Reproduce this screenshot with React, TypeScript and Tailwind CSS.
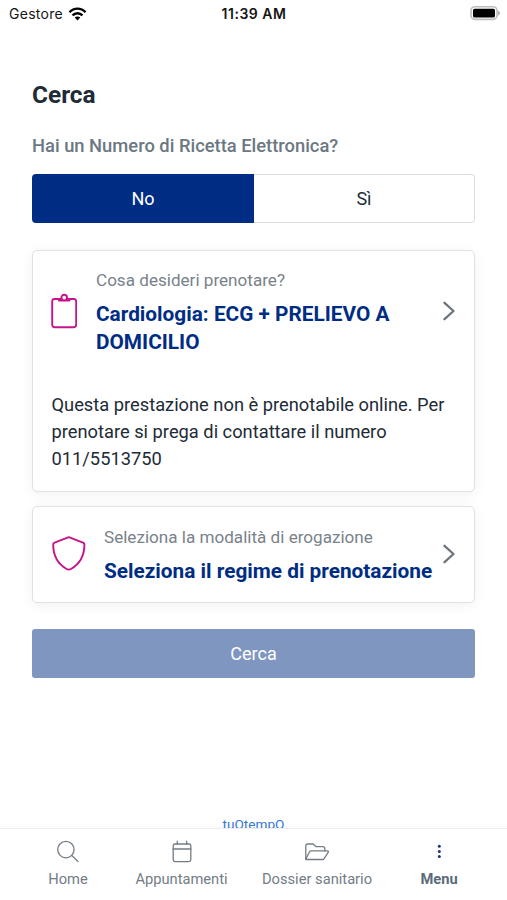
import type { ReactNode } from 'react';

const StatusBar = () => {
  return (
    <header className="grid h-7 shrink-0 grid-cols-3 items-center pr-[7px] pl-[9px] font-['Inter',sans-serif] leading-7 text-[#151515]">
      <div className="flex items-center gap-[5px]">
        <span className="text-[14px] tracking-[0.28px]">Gestore</span>
        <svg width="19" height="14" viewBox="0 0 18 14" fill="none" stroke="#000" strokeWidth="2.4">
          <path d="M1 5.2C5.5.4 12.5.4 17 5.2" />
          <path d="M4 8.4c2.9-2.9 7.1-2.9 10 0" />
          <path d="M9 13.6l-2.8-3c1.6-1.5 4-1.5 5.6 0z" fill="#000" stroke="none" />
        </svg>
      </div>

      <span className="-ml-px text-center text-[14px] font-semibold tracking-[0.5px] whitespace-nowrap">11:39 AM</span>

      <svg className="-mt-px justify-self-end" width="31" height="15" viewBox="0 0 31 15">
        <rect x="2" y=".8" width="26" height="12.6" rx="3.8" fill="#fff" stroke="#bdbdbd" strokeWidth="1.6" />
        <rect x="4" y="2.7" width="22" height="8.8" rx="1.6" fill="#000" />
        <path d="M29.3 5c1.8.8 1.8 3.4 0 4.2z" fill="#aaa" stroke="#aaa" strokeWidth=".6" />
      </svg>
    </header>
  );
};

const Chevron = () => {
  return (
    <svg
      className="shrink-0"
      width="12"
      height="20"
      viewBox="0 0 12 20"
      fill="none"
      stroke="#6c757d"
      strokeWidth="2.3"
      strokeLinecap="round"
      strokeLinejoin="round"
    >
      <path d="M1.5 1.8L10.5 10l-9 8.2" />
    </svg>
  );
};

const ClipboardIcon = () => {
  return (
    <svg width="26" height="36" viewBox="0 0 26 36" fill="none" stroke="#c6148a" strokeWidth="1.9">
      <rect x="1.2" y="6" width="24" height="28.2" rx="2.4" />
      <rect x="7" y="5.4" width="12.4" height="3.2" rx="1" fill="#c6148a" stroke="none" />
      <circle cx="13.2" cy="4.6" r="2.8" fill="#fff" />
    </svg>
  );
};

const ShieldIcon = () => {
  return (
    <svg
      width="34"
      height="36"
      viewBox="0 0 34 36"
      fill="none"
      stroke="#c6148a"
      strokeWidth="1.9"
      strokeLinejoin="round"
    >
      <path d="M16.8 1.2L2.6 6.6C1.6 7 1.2 7.6 1.2 8.6c0 11.4 4.9 19.6 13.4 24.4 1.6.9 2.8.9 4.4 0C27.5 28.2 32.4 20 32.4 8.6c0-1-.4-1.6-1.4-2z" />
    </svg>
  );
};

type SelectorProps = {
  icon: ReactNode;
  label: string;
  value: string;
};

const Selector = ({ icon, label, value }: SelectorProps) => {
  return (
    <button className="flex w-full items-center text-left">
      {icon}
      <span className="min-w-0 flex-1">
        <span className="block text-[17.1px] leading-[26px] whitespace-nowrap text-[#79828a]">{label}</span>
        <span className="mt-[6.5px] block text-[20.8px] leading-7 font-bold text-[#002d84]">{value}</span>
      </span>
      <Chevron />
    </button>
  );
};

type TabProps = {
  name: string;
  active?: boolean;
  className: string;
  children: ReactNode;
};

const Tab = ({ name, active, className, children }: TabProps) => {
  return (
    <a className={`flex flex-col items-center ${className}`}>
      <svg
        width="26"
        height="26"
        viewBox="0 0 26 26"
        fill="none"
        stroke="#737c86"
        strokeWidth="1.3"
        strokeLinecap="round"
        strokeLinejoin="round"
      >
        {children}
      </svg>
      <span
        className={`mt-1 text-[14.7px] leading-5 whitespace-nowrap ${active ? 'font-bold text-[#5c6b7a]' : 'text-[#737c86]'}`}
      >
        {name}
      </span>
    </a>
  );
};

const TabBar = () => {
  return (
    <nav className="flex h-[72px] shrink-0 border-t border-[#eeeeee] bg-white pt-[10px] shadow-[0_0_4px_rgba(0,0,0,0.06)]">
      <Tab name="Home" className="ml-[18px] w-[100px]">
        <circle cx="10.9" cy="10.6" r="8.2" />
        <path d="M16.8 16.5l6.2 6" />
      </Tab>

      <Tab name="Appuntamenti" className="ml-[4px] w-[119px]">
        <rect x="4.2" y="5" width="17.6" height="17.6" rx="1.8" />
        <path d="M4.2 10h17.6M8.3 5V2.2M17.7 5V2.2" />
      </Tab>

      <Tab name="Dossier sanitario" className="ml-[11px] w-[130px]">
        <path d="M1.8 20.2V7c0-1.2.8-2 2-2h5.4l2.8 2.7h6.8c1.2 0 2 .8 2 2v2.2" />
        <path d="M1.8 20.2L5.4 13c.4-.8.9-1.1 1.7-1.1h16.5c.8 0 1.1.6.7 1.2l-4.2 6.5c-.4.6-.9.9-1.7.9H2.4c-.4 0-.6-.1-.6-.3z" />
      </Tab>

      <Tab name="Menu" active className="ml-[17px] w-[80px]">
        <g fill="#20307f" stroke="none">
          <circle cx="13.3" cy="7.3" r="1.5" />
          <circle cx="13.3" cy="12.5" r="1.5" />
          <circle cx="13.3" cy="17.5" r="1.5" />
        </g>
      </Tab>
    </nav>
  );
};

const card =
  'rounded-[5px] border border-[#dfe1e2] bg-white shadow-[0_2px_14px_rgba(0,0,0,0.06)]';

export default function App() {
  return (
    <div className="flex h-[900px] w-[507px] flex-col overflow-hidden bg-white font-['Roboto',sans-serif] text-[#212b36]">
      <StatusBar />

      <main className="flex h-[800px] shrink-0 flex-col overflow-hidden px-8 pt-[51px]">
        <h1 className="text-[24.4px] leading-8 font-bold">Cerca</h1>

        <h2 className="mt-[23px] text-[18.35px] leading-6 font-medium whitespace-nowrap text-[#6b7883]">
          Hai un Numero di Ricetta Elettronica?
        </h2>

        <div className="mt-[16px] flex h-[49px] shrink-0 text-[18px]">
          <button className="w-[222px] rounded-l-[4px] bg-[#002d84] text-white">No</button>
          <button className="flex-1 rounded-r-[4px] border border-l-0 border-[#dcdfe2]">Sì</button>
        </div>

        <section className={`mt-[27px] h-[242px] shrink-0 px-[19px] pt-[16px] ${card}`}>
          <Selector
            icon={<div className="-mt-px -ml-px mr-[19px]"><ClipboardIcon /></div>}
            label="Cosa desideri prenotare?"
            value="Cardiologia: ECG + PRELIEVO A DOMICILIO"
          />
          <p className="mt-[35.5px] -mr-1 -ml-[0.5px] text-[18.3px] leading-[27px]">
            Questa prestazione non è prenotabile online. Per prenotare si prega di contattare il numero 011/5513750
          </p>
        </section>

        <section className={`mt-[14px] h-[97px] shrink-0 px-[19px] pt-[17px] ${card}`}>
          <Selector
            icon={<div className="-mt-px mr-[18px]"><ShieldIcon /></div>}
            label="Seleziona la modalità di erogazione"
            value="Seleziona il regime di prenotazione"
          />
        </section>

        <button className="mt-[26px] h-[49px] shrink-0 rounded-[3px] bg-[#7f96c1] text-[18px] text-white">
          Cerca
        </button>

        <a className="mt-[136px] text-center text-[13.6px] leading-5 text-[#3478d4]">tuOtempO</a>
      </main>

      <TabBar />
    </div>
  );
}
